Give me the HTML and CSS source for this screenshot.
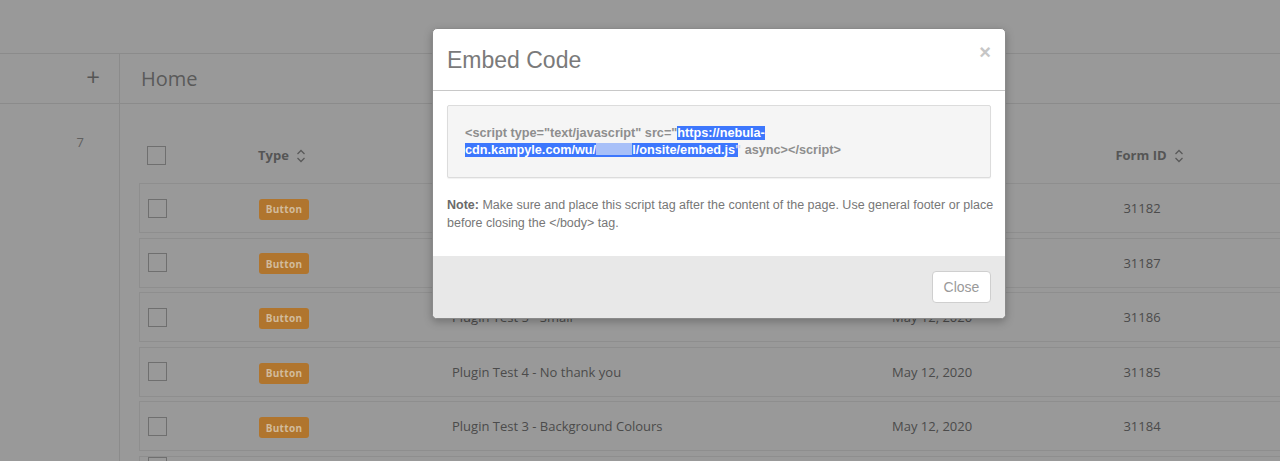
FILE: index.html
```html
<!DOCTYPE html>
<html lang="en">
<head>
<meta charset="utf-8">
<title>Embed Code</title>
<link rel="stylesheet" href="styles.css">
</head>
<body>
<div class="app">
  <header class="topbar"></header>
  <div class="main">
    <aside class="sidebar">
      <div class="side-head"><span class="plus">+</span></div>
      <div class="side-count">7</div>
    </aside>
    <section class="content">
      <div class="content-head"><h1 class="page-title">Home</h1></div>
      <div class="table">
        <div class="thead grid">
          <span class="check"></span>
          <span class="th">Type <svg class="sort" viewBox="0 0 10 16" width="10" height="16"><path d="M1.5 6 L5 2.5 L8.5 6 M1.5 10 L5 13.5 L8.5 10" fill="none" stroke="#5a5a5a" stroke-width="1.3"/></svg></span>
          <span></span>
          <span></span>
          <span class="th th-id">Form ID <svg class="sort" viewBox="0 0 10 16" width="10" height="16"><path d="M1.5 6 L5 2.5 L8.5 6 M1.5 10 L5 13.5 L8.5 10" fill="none" stroke="#5a5a5a" stroke-width="1.3"/></svg></span>
        </div>
        <div class="rows">
          <div class="row grid"><span class="check"></span><span><span class="badge">Button</span></span><span class="cell">Plugin Test 7 - Large</span><span class="cell">May 12, 2020</span><span class="cell id">31182</span></div>
          <div class="row grid"><span class="check"></span><span><span class="badge">Button</span></span><span class="cell">Plugin Test 6 - Medium</span><span class="cell">May 12, 2020</span><span class="cell id">31187</span></div>
          <div class="row grid"><span class="check"></span><span><span class="badge">Button</span></span><span class="cell">Plugin Test 5 - Small</span><span class="cell">May 12, 2020</span><span class="cell id">31186</span></div>
          <div class="row grid"><span class="check"></span><span><span class="badge">Button</span></span><span class="cell">Plugin Test 4 - No thank you</span><span class="cell">May 12, 2020</span><span class="cell id">31185</span></div>
          <div class="row grid"><span class="check"></span><span><span class="badge">Button</span></span><span class="cell">Plugin Test 3 - Background Colours</span><span class="cell">May 12, 2020</span><span class="cell id">31184</span></div>
          <div class="row grid row-last"><span class="check"></span><span></span><span></span><span></span><span></span></div>
        </div>
      </div>
    </section>
  </div>
</div>

<div class="modal">
  <div class="modal-head">
    <h2 class="modal-title">Embed Code</h2>
    <span class="close-x">&times;</span>
  </div>
  <div class="modal-body">
    <div class="code-box"><code class="code">&lt;script type="text/javascript" src="<span class="sel">https://nebula-</span><br><span class="sel">cdn.kampyle.com/wu/<span class="redact"></span>l/onsite/embed.js</span><span class="sel-q">"</span> async&gt;&lt;/script&gt;</code></div>
    <p class="note"><b>Note:</b> Make sure and place this script tag after the content of the page. Use general footer or place<br>before closing the &lt;/body&gt; tag.</p>
  </div>
  <div class="modal-foot">
    <button class="btn-close">Close</button>
  </div>
</div>
</body>
</html>
```

FILE: styles.css
```css
* { box-sizing: border-box; }
html, body { margin: 0; padding: 0; }
body {
  width: 1280px;
  height: 461px;
  overflow: hidden;
  background: #999999;
  font-family: "Open Sans", "Liberation Sans", sans-serif;
  color: #4e4e4e;
}
.app { width: 1280px; height: 461px; overflow: hidden; }
.topbar {
  height: 54px;
  border-bottom: 1px solid #8b8b8b;
}
.main { display: flex; }
.sidebar {
  width: 120px;
  flex: none;
  border-right: 1px solid #8b8b8b;
  height: 420px;
}
.side-head {
  height: 50px;
  border-bottom: 1px solid #8b8b8b;
  display: flex;
  align-items: center;
  justify-content: flex-end;
  padding-right: 19px;
}
.plus {
  font-size: 24px;
  line-height: 1;
  color: #555;
  margin-top: -4px;
}
.side-count {
  text-align: right;
  padding-right: 35px;
  padding-top: 29px;
  font-size: 13px;
  color: #606060;
}
.content { flex: 1; min-width: 0; }
.content-head {
  height: 50px;
  border-bottom: 1px solid #8b8b8b;
  display: flex;
  align-items: center;
  padding-left: 21px;
  margin-right: -40px;
}
.page-title {
  margin: 0;
  font-size: 20px;
  font-weight: 400;
  color: #5a5a5a;
}
.table {
  padding: 26px 0 0 19px;
  width: 1200px;
}
.grid {
  display: grid;
  grid-template-columns: 111px 193px 440px 151px 198px 1fr;
  align-items: center;
  padding-left: 8px;
}
.thead { height: 50px; }
.th {
  font-size: 13px;
  font-weight: 700;
  color: #555;
  display: flex;
  align-items: center;
  gap: 7px;
}
.th-id { justify-content: center; padding-left: 17px; }
.sort { display: block; margin-top: 1px; }
.check {
  display: block;
  width: 19px;
  height: 19px;
  border: 1px solid #6f6f6f;
}
.rows {
  margin-top: 3px;
  display: flex;
  flex-direction: column;
  gap: 4.6px;
}
.row {
  height: 50px;
  border: 1px solid #8e8e8e;
  width: 1160px;
}
.row-last { height: 10px; overflow: hidden; }
.badge {
  display: inline-flex;
  align-items: center;
  justify-content: center;
  width: 50px;
  height: 21px;
  border-radius: 3px;
  background: #b0752e;
  color: #d2bb9c;
  font-size: 10px;
  font-weight: 700;
  letter-spacing: 0.3px;
}
.cell { font-size: 13px; color: #4b4b4b; }
.id { text-align: center; }

/* modal */
.modal {
  position: absolute;
  left: 432px;
  top: 28px;
  width: 574px;
  background: #fff;
  border: 1px solid #8a8a8a;
  border-radius: 5px;
  box-shadow: 0 3px 9px rgba(0,0,0,0.25);
  font-family: "Liberation Sans", Arial, sans-serif;
  overflow: hidden;
}
.modal-head {
  height: 62px;
  border-bottom: 1px solid #c8c8c8;
  display: flex;
  align-items: center;
  justify-content: space-between;
  padding: 0 14px 0 14px;
}
.modal-title {
  margin: 0;
  font-size: 23px;
  font-weight: 400;
  color: #7a7a7a;
  margin-top: 1px;
}
.close-x {
  font-size: 20px;
  font-weight: 700;
  color: #c6c6c6;
  line-height: 1;
  margin-top: -15px;
}
.modal-body { padding: 14px 14px 24px 14px; }
.code-box {
  background: #f5f5f5;
  border: 1px solid #dcdcdc;
  border-radius: 2px;
  box-shadow: 0 1px 1px rgba(0,0,0,0.06);
  padding: 19px 17px 18px 17px;
  min-height: 73px;
}
.code {
  display: block;
  font-family: "Liberation Sans", Arial, sans-serif;
  font-size: 12.7px;
  font-weight: 700;
  line-height: 17px;
  color: #8e8e8e;
  white-space: nowrap;
}
.sel {
  background: #3d77fd;
  color: #ffffff;
}
.sel-q {
  background: linear-gradient(90deg, #3d77fd 50%, transparent 50%);
  color: #cfd9f5;
}
.redact {
  display: inline-block;
  width: 36px;
  height: 12px;
  vertical-align: -1px;
  background: #a8c0f8;
}
.note {
  margin: 18px 0 0 0;
  font-size: 12.5px;
  line-height: 18px;
  color: #777;
  white-space: nowrap;
}
.note b { color: #6a6a6a; }
.modal-foot {
  height: 62px;
  background: #e8e8e8;
  display: flex;
  align-items: center;
  justify-content: flex-end;
  padding: 0 14px;
}
.btn-close {
  width: 59px;
  height: 32px;
  background: #fff;
  border: 1px solid #cfcfcf;
  border-radius: 4px;
  font-family: "Liberation Sans", Arial, sans-serif;
  font-size: 14px;
  color: #9a9a9a;
  padding: 0;
}
```
